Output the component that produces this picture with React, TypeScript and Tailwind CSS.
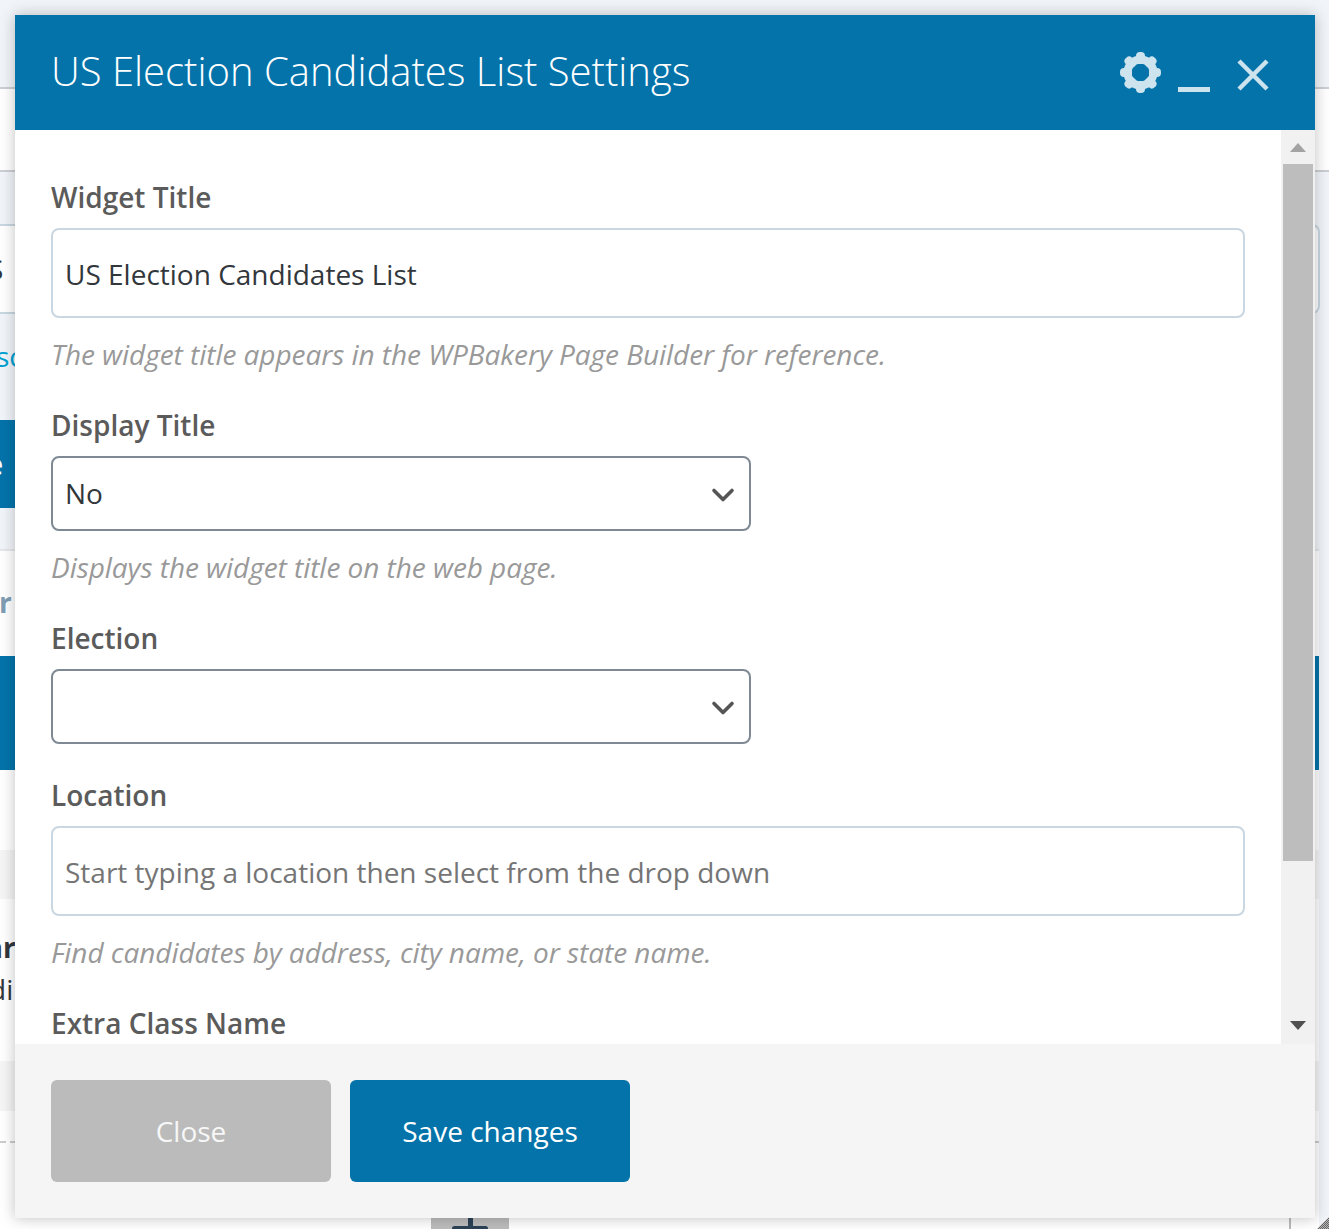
import { ChevronDown } from "lucide-react";

const font = "font-['Open_Sans',sans-serif]";

function Gear() {
  const teeth = [0, 45, 90, 135, 180, 225, 270, 315];
  return (
    <svg width="41" height="41" viewBox="0 0 41 41" className="text-[#cde3ee]">
      <circle cx="20.5" cy="20.5" r="13" fill="none" stroke="currentColor" strokeWidth="8" />
      {teeth.map((deg) => (
        <rect
          key={deg}
          x="16"
          y="0"
          width="9"
          height="12"
          rx="4"
          fill="currentColor"
          transform={`rotate(${deg} 20.5 20.5)`}
        />
      ))}
    </svg>
  );
}

function Label({ children }: { children: React.ReactNode }) {
  return <label className="mb-[10px] block text-[28px] leading-[41px] font-semibold text-[#5b5b5b]">{children}</label>;
}

function Help({ children }: { children: React.ReactNode }) {
  return <p className="mt-4 mb-[31px] text-[28px] leading-[40px] tracking-[-0.05px] text-[#999999] italic">{children}</p>;
}

function TextInput(props: { value?: string; placeholder?: string }) {
  return (
    <input
      readOnly
      value={props.value ?? ""}
      placeholder={props.placeholder}
      className="block h-[90px] w-full rounded-lg border-2 border-[#c8d7e1] bg-white px-3 pt-[2px] text-[28px] text-[#32373c] outline-none placeholder:text-[#757575]"
    />
  );
}

function SelectBox({ value }: { value?: string }) {
  return (
    <div className="relative w-[700px]">
      <select
        defaultValue={value ?? ""}
        className="block h-[75px] w-full appearance-none rounded-lg border-2 border-[#7e8993] bg-white px-3 pb-[2px] text-[28px] text-[#32373c] outline-none"
      >
        <option value="">{""}</option>
        <option value="No">No</option>
        <option value="Yes">Yes</option>
      </select>
      <ChevronDown
        className="pointer-events-none absolute top-[21px] right-[10px] h-[36px] w-[36px] text-[#555555]"
        strokeWidth={2.4}
      />
    </div>
  );
}

function PageBehind() {
  return (
    <div className={`h-[1229px] overflow-hidden bg-[#f1f5f9] text-[28px] ${font}`}>
      <div className="h-[87px]" />
      <div className="h-[85px] border-y-2 border-[#cbcfd3] bg-white" />
      <div className="mt-[52px] mr-[9px] h-[90px] overflow-hidden rounded-r-lg border-y-2 border-r-2 border-[#c8d7e1] bg-white leading-[86px] text-[#32373c]">
        <span className="-ml-[12px]">S</span>
      </div>
      <div className="mr-[10px]">
        <div className="h-[106px] overflow-hidden pt-[21px] leading-[42px] text-[#00a0d2]">
          <span className="-ml-[4px]">sc</span>
        </div>
        <div className="h-[88px] w-[200px] overflow-hidden bg-[#0473aa] leading-[88px] font-semibold text-white">
          <span className="-ml-[13px]">e</span>
        </div>
        <div className="h-[41px]" />
        <div className="h-[107px] overflow-hidden border-t-2 border-[#e4e8ec] bg-white pt-[30px] leading-[42px] font-bold text-[#7f9db3]">
          <span className="-ml-[1px]">r</span>
        </div>
        <div className="h-[114px] bg-[#0473aa]" />
        <div className="h-[80px] bg-white" />
        <div className="h-[49px] bg-[#f5f5f5]" />
        <div className="flex h-[162px] flex-col overflow-hidden bg-white pt-[27px] leading-[42px] text-[#32373c]">
          <span className="-ml-[14px] font-bold">ar</span>
          <span className="-ml-[11px]">di</span>
        </div>
        <div className="h-[50px] bg-[#f5f5f5]" />
        <div className="h-[118px] bg-white pt-[30px]">
          <div className="border-t-2 border-dashed border-[#cccccc]" />
          <div className="mt-[75px] ml-[431px] flex h-[20px] w-[78px] justify-center bg-[#bdbdbd]">
            <span className="mt-[8px] h-[5px] w-[36px] rounded-full bg-[#2b4256]" />
          </div>
        </div>
      </div>
    </div>
  );
}

export default function App() {
  return (
    <div className={`relative h-[1229px] overflow-hidden ${font}`}>
      <PageBehind />

      {/* bits of the page peeking out under the modal */}
      <span className="absolute top-[1218px] left-[468px] h-[11px] w-[5px] bg-[#2b4256]" />
      <span className="absolute top-[1218px] left-[1289px] h-[11px] border-l-2 border-dashed border-[#bbbbbb]" />
      <svg width="12" height="12" viewBox="0 0 12 12" className="absolute right-0 bottom-0">
        <defs>
          <pattern id="grip" width="2" height="2" patternUnits="userSpaceOnUse">
            <rect width="1" height="1" fill="#666666" />
            <rect x="1" y="1" width="1" height="1" fill="#666666" />
            <rect x="1" width="1" height="1" fill="#b5b5b5" />
            <rect y="1" width="1" height="1" fill="#b5b5b5" />
          </pattern>
        </defs>
        <polygon points="12,0 12,12 0,12" fill="url(#grip)" />
      </svg>

      <div className="absolute top-[15px] left-[15px] flex h-[1203px] w-[1300px] flex-col shadow-[0_0_14px_rgba(0,0,0,0.25)]">
        <div className="flex h-[115px] shrink-0 items-center justify-between bg-[#0473aa] pr-[46px] pl-9">
          <h1 className="mb-1 text-[40px] leading-[110px] font-light text-white">US Election Candidates List Settings</h1>
          <div className="relative flex items-center">
            <Gear />
            <span className="mt-[33px] ml-[17px] h-[5px] w-[32px] bg-[#cde3ee]" />
            <svg width="32" height="32" viewBox="0 0 32 32" className="mt-[4px] ml-[27px]">
              <path d="M2 2 L30 30 M30 2 L2 30" stroke="#cde3ee" strokeWidth="4.5" fill="none" />
            </svg>
          </div>
        </div>

        <div className="flex min-h-0 flex-1 bg-white">
          <div className="min-w-0 flex-1 overflow-hidden pt-[47px] pr-9 pl-9">
            <Label>Widget Title</Label>
            <TextInput value="US Election Candidates List" />
            <Help>The widget title appears in the WPBakery Page Builder for reference.</Help>

            <Label>Display Title</Label>
            <SelectBox value="No" />
            <Help>Displays the widget title on the web page.</Help>

            <Label>Election</Label>
            <SelectBox />

            <div className="mt-[31px]">
              <Label>Location</Label>
            </div>
            <TextInput placeholder="Start typing a location then select from the drop down" />
            <Help>Find candidates by address, city name, or state name.</Help>

            <Label>Extra Class Name</Label>
          </div>

          <div className="relative flex w-[34px] shrink-0 flex-col bg-[#f1f1f1]">
            <svg width="16" height="9" viewBox="0 0 16 9" className="mt-[13px] ml-[9px]">
              <polygon points="8,0 16,9 0,9" fill="#a3a3a3" />
            </svg>
            <div className="mt-[12px] ml-[2px] h-[697px] w-[30px] bg-[#bdbdbd]" />
            <svg width="16" height="9" viewBox="0 0 16 9" className="mt-[160px] ml-[9px]">
              <polygon points="0,0 16,0 8,9" fill="#505050" />
            </svg>
          </div>
        </div>

        <div className="flex h-[174px] shrink-0 items-start gap-[19px] bg-[#f5f5f5] pt-[36px] pl-[36px]">
          <button className="h-[102px] w-[280px] rounded-md bg-[#bbbbbb] text-[28px] text-[#f7f7f7]">Close</button>
          <button className="h-[102px] w-[280px] rounded-md bg-[#0473aa] text-[28px] text-white">Save changes</button>
        </div>
      </div>
    </div>
  );
}
